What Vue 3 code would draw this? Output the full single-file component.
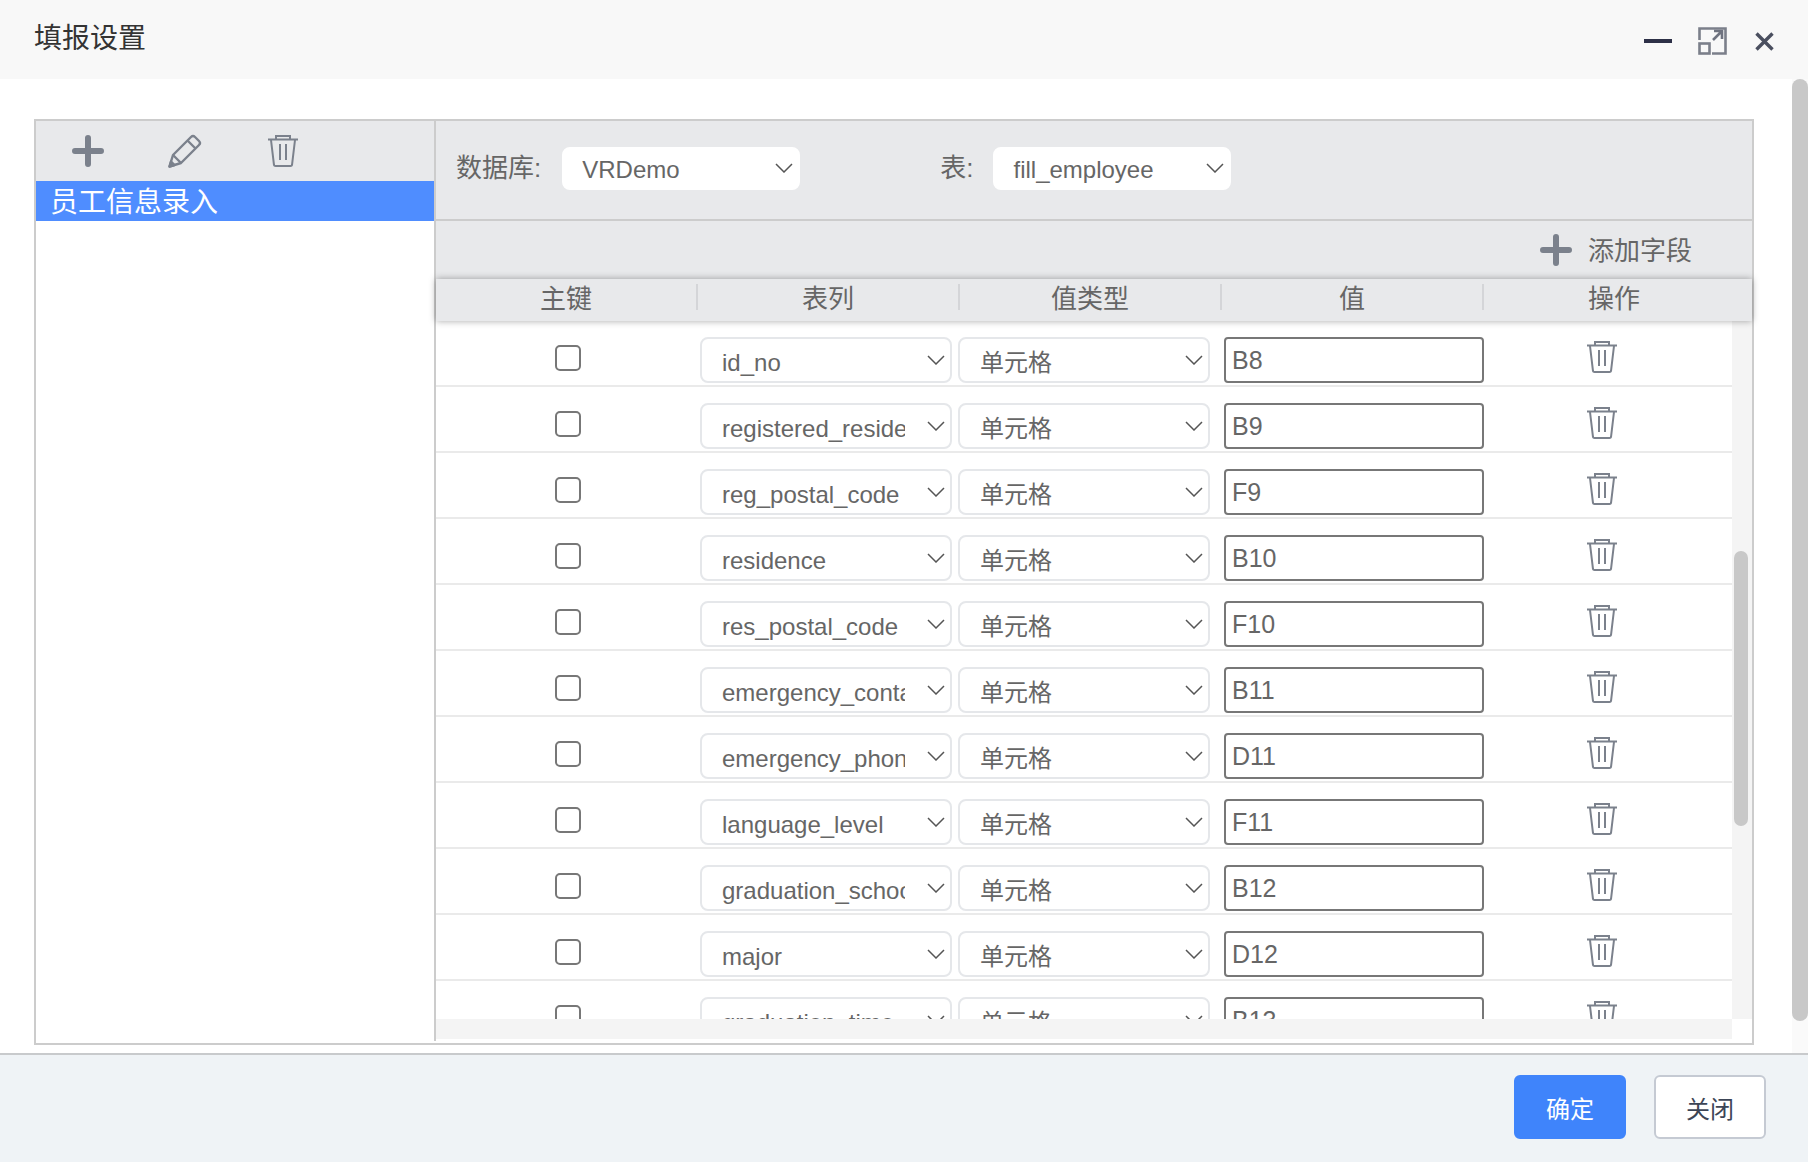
<template>
  <div class="dialog">
    <header class="dialog-head">
      <span class="dialog-title">填报设置</span>
      <div class="win-btns">
        <svg class="ic-min" width="28" height="4" viewBox="0 0 28 4"><rect width="28" height="4" fill="#2d3047" /></svg>
        <svg class="ic-max" width="29" height="28" viewBox="0 0 29 28" fill="none" stroke="#7b7f8a" stroke-width="2.6">
          <path d="M1.5 13V1.5H27.5V26.5H14" />
          <rect x="1.5" y="16.5" width="10" height="10" />
          <path d="M15 13L24 4M16 4H24V12" stroke="#6f7380" />
        </svg>
        <svg class="ic-close" width="19" height="19" viewBox="0 0 19 19" stroke="#4a4f5f" stroke-width="3.4">
          <path d="M1.5 1.5L17.5 17.5M17.5 1.5L1.5 17.5" />
        </svg>
      </div>
    </header>

    <main class="dialog-main">
      <div class="content">
        <div class="box">
          <aside class="side">
            <div class="side-tools">
              <svg width="32" height="32" viewBox="0 0 32 32"><path d="M16 3V29M3 16H29" stroke="#7b818c" stroke-width="6" stroke-linecap="round" /></svg>
              <svg width="34" height="34" viewBox="0 0 34 34" fill="none" stroke="#7b818c" stroke-width="2.4" stroke-linejoin="round">
                <path d="M1.5 32.5L5 21L23 3Q25 1 27 3L31 7Q33 9 31 11L13 29Z" />
                <path d="M5 21L13 29M19.5 6.5L27.5 14.5" />
                <path d="M1.5 32.5L3 27.5L6.5 31Z" fill="#7b818c" />
              </svg>
              <svg width="30" height="32" viewBox="0 0 30 32" fill="none" stroke="#7b818c" stroke-width="2">
                <path d="M8 4V1H22V4M0 4.5H30M3 5L6 30Q6.2 31 7.5 31H22.500Q23.800 31 24 30L27 5M12 9V25M18 9V25" />
              </svg>
            </div>
            <div class="side-item">员工信息录入</div>
          </aside>

          <section class="panel">
            <div class="form-row">
              <label class="form-label">数据库:</label>
              <div class="sel-wrap top-sel">
                <select class="sel plain"><option>VRDemo</option></select>
                <svg class="chev" width="18" height="10" viewBox="0 0 18 10"><path d="M1 1L9 9L17 1" fill="none" stroke="#555" stroke-width="1.500" /></svg>
              </div>
              <label class="form-label second">表:</label>
              <div class="sel-wrap top-sel">
                <select class="sel plain"><option>fill_employee</option></select>
                <svg class="chev" width="18" height="10" viewBox="0 0 18 10"><path d="M1 1L9 9L17 1" fill="none" stroke="#555" stroke-width="1.500" /></svg>
              </div>
            </div>

            <div class="add-row">
              <svg width="32" height="32" viewBox="0 0 32 32"><path d="M16 3V29M3 16H29" stroke="#7b818c" stroke-width="6" stroke-linecap="round" /></svg>
              <span>添加字段</span>
            </div>

            <div class="table-head">
              <div v-for="c in columns" :key="c" class="th">{{ c }}</div>
            </div>

            <div class="table-wrap">
              <div class="rows">
                <div v-for="r in rows" :key="r.col" class="row">
                  <div class="cell-check"><input type="checkbox" class="check" /></div>
                  <div class="cell-col">
                    <div class="sel-wrap">
                      <select class="sel" :value="r.col">
                        <option v-for="o in rows" :key="o.col" :value="o.col">{{ o.col }}</option>
                      </select>
                      <svg class="chev" width="18" height="10" viewBox="0 0 18 10"><path d="M1 1L9 9L17 1" fill="none" stroke="#555" stroke-width="1.500" /></svg>
                    </div>
                  </div>
                  <div class="cell-type">
                    <div class="sel-wrap">
                      <select class="sel"><option>单元格</option></select>
                      <svg class="chev" width="18" height="10" viewBox="0 0 18 10"><path d="M1 1L9 9L17 1" fill="none" stroke="#555" stroke-width="1.500" /></svg>
                    </div>
                  </div>
                  <input class="val" :value="r.val" />
                  <div class="cell-op">
                    <svg width="30" height="32" viewBox="0 0 30 32" fill="none" stroke="#7b818c" stroke-width="2">
                      <path d="M8 4V1H22V4M0 4.5H30M3 5L6 30Q6.2 31 7.5 31H22.500Q23.800 31 24 30L27 5M12 9V25M18 9V25" />
                    </svg>
                  </div>
                </div>
              </div>
              <div class="vtrack"><div class="vthumb"></div></div>
            </div>
            <div class="hbar"></div>
          </section>
        </div>
      </div>
      <div class="page-track"><div class="page-thumb"></div></div>
    </main>

    <footer class="dialog-foot">
      <button class="btn primary">确定</button>
      <button class="btn">关闭</button>
    </footer>
  </div>
</template>

<script setup>
const columns = ["主键", "表列", "值类型", "值", "操作"];

const rows = [
  { col: "id_no", val: "B8" },
  { col: "registered_residence", val: "B9" },
  { col: "reg_postal_code", val: "F9" },
  { col: "residence", val: "B10" },
  { col: "res_postal_code", val: "F10" },
  { col: "emergency_contact", val: "B11" },
  { col: "emergency_phone", val: "D11" },
  { col: "language_level", val: "F11" },
  { col: "graduation_school", val: "B12" },
  { col: "major", val: "D12" },
  { col: "graduation_time", val: "B13" },
];
</script>

<style>
html, body {
  margin: 0;
  overflow: hidden;
  background: #fff;
}
</style>

<style scoped>
.dialog {
  width: 1808px;
  height: 1162px;
  display: flex;
  flex-direction: column;
  font-family: "Liberation Sans", "Noto Sans CJK SC", sans-serif;
  color: #666;
  overflow: hidden;
}

.dialog-head {
  height: 79px;
  flex: none;
  background: #f8f8f8;
  display: flex;
  align-items: center;
  justify-content: space-between;
  padding: 0 34px;
}

.dialog-title {
  font-size: 28px;
  line-height: 38px;
  color: #333;
  margin-bottom: 2px;
}

.win-btns {
  display: flex;
  align-items: center;
  margin-top: 3px;
}

.ic-max {
  margin-left: 26px;
}

.ic-close {
  margin-left: 28px;
}

.dialog-main {
  flex: 1;
  min-height: 0;
  display: flex;
}

.content {
  flex: 1;
  padding: 40px 38px 0 34px;
}

.box {
  height: 926px;
  box-sizing: border-box;
  border: 2px solid #ccc;
  padding-bottom: 2px;
  display: flex;
}

.side {
  width: 398px;
  flex: none;
  border-right: 2px solid #ccc;
}

.side-tools {
  height: 60px;
  background: #e8e9eb;
  display: flex;
  align-items: center;
  padding-left: 36px;
  gap: 64px;
}

.side-tools svg:nth-child(3) {
  margin-left: 2px;
}

.side-item {
  height: 40px;
  box-sizing: border-box;
  padding: 2px 0 0 14px;
  line-height: 40px;
  background: #4f8dff;
  color: #fff;
  font-size: 28px;
  overflow: hidden;
}

.panel {
  flex: 1;
  min-width: 0;
  display: flex;
  flex-direction: column;
}

.form-row {
  height: 100px;
  flex: none;
  box-sizing: border-box;
  background: #e8e9eb;
  border-bottom: 2px solid #ccc;
  padding: 26px 0 0 20px;
  display: flex;
  align-items: flex-start;
}

.form-label {
  font-size: 26px;
  line-height: 42px;
  margin-right: 21px;
}

.form-label.second {
  margin-left: 140px;
  margin-right: 20px;
}

.sel-wrap {
  position: relative;
  width: 252px;
  height: 46px;
}

.top-sel {
  width: 238px;
  height: 43px;
}

.sel {
  appearance: none;
  width: 100%;
  height: 100%;
  box-sizing: border-box;
  background: #fff;
  border: 2px solid #e5e7ea;
  border-radius: 8px;
  font: inherit;
  font-size: 24px;
  color: #666;
  padding: 4px 45px 0 20px;
  outline: none;
}

.sel.plain {
  border-color: #fff;
  padding: 2px 40px 0 18px;
}

.chev {
  position: absolute;
  right: 7px;
  top: 18px;
  pointer-events: none;
}

.top-sel .chev {
  top: 16px;
}

.add-row {
  height: 58px;
  flex: none;
  background: #e8e9eb;
  display: flex;
  align-items: center;
  justify-content: flex-end;
  padding-right: 60px;
  gap: 16px;
  font-size: 26px;
}

.add-row span {
  margin-bottom: 4px;
}

.table-head {
  height: 42px;
  flex: none;
  background: #e8e9eb;
  display: flex;
  position: relative;
  box-shadow: 0 0 7px rgba(0, 0, 0, 0.35);
  padding-top: 5px;
  box-sizing: border-box;
}

.th {
  width: 262px;
  height: 26px;
  box-sizing: border-box;
  border-right: 2px solid #d4d5d8;
  text-align: center;
  font-size: 26px;
  line-height: 30px;
}

.th:last-child {
  border-right: none;
  padding-right: 2px;
}

.table-wrap {
  height: 698px;
  flex: none;
  display: flex;
}

.rows {
  flex: 1;
  min-width: 0;
  overflow: hidden;
}

.row {
  height: 66px;
  box-sizing: border-box;
  border-bottom: 2px solid #eaeaea;
  padding-top: 16px;
  display: flex;
  align-items: flex-start;
}

.cell-check {
  width: 264px;
  flex: none;
  display: flex;
  justify-content: center;
  padding-top: 8px;
  box-sizing: border-box;
}

.check {
  appearance: none;
  width: 26px;
  height: 26px;
  margin: 0;
  box-sizing: border-box;
  border: 2px solid #777;
  border-radius: 5px;
  background: #fff;
}

.cell-col {
  width: 258px;
  flex: none;
}

.cell-type {
  width: 266px;
  flex: none;
}

.val {
  width: 260px;
  height: 46px;
  flex: none;
  box-sizing: border-box;
  border: 2px solid #777;
  border-radius: 4px;
  padding: 0 0 0 6px;
  font: inherit;
  font-size: 25px;
  color: #666;
  outline: none;
}

.cell-op {
  flex: 1;
  display: flex;
  justify-content: center;
  padding: 4px 12px 0 0;
}

.vtrack {
  width: 20px;
  flex: none;
  background: #f4f4f4;
}

.vthumb {
  width: 14px;
  height: 275px;
  margin: 230px 0 0 2px;
  border-radius: 7px;
  background: #c8c8c8;
}

.hbar {
  height: 20px;
  flex: none;
  margin-right: 20px;
  background: #f4f4f4;
}

.page-track {
  width: 16px;
  flex: none;
  background: #fafafa;
}

.page-thumb {
  height: 942px;
  border-radius: 8px;
  background: #c8c8c8;
}

.dialog-foot {
  height: 109px;
  flex: none;
  box-sizing: border-box;
  background: #eff3f6;
  border-top: 2px solid #c8cacc;
  padding: 20px 42px 0 0;
  display: flex;
  justify-content: flex-end;
  align-items: flex-start;
  gap: 28px;
}

.btn {
  width: 112px;
  height: 64px;
  box-sizing: border-box;
  border: 2px solid #c5cad3;
  border-radius: 6px;
  background: #fff;
  color: #3c4556;
  font: inherit;
  font-size: 24px;
}

.btn.primary {
  background: #3f84fb;
  border-color: #3f84fb;
  color: #fff;
}
</style>
